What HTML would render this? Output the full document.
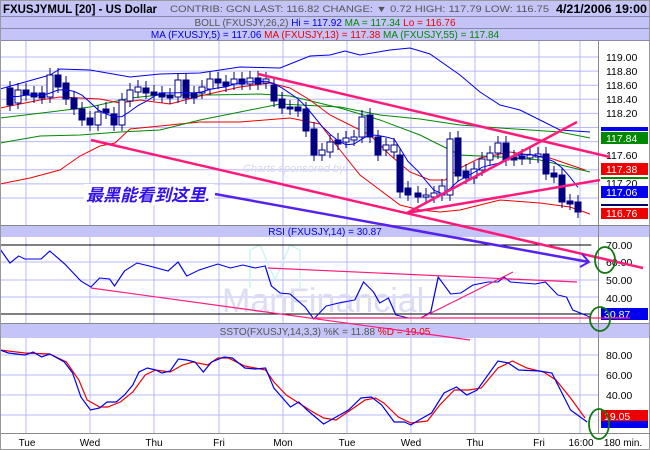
<!DOCTYPE html>
<html><head><meta charset="utf-8"><style>
body{margin:0;background:#fff;}
svg{display:block;font-family:"Liberation Sans",Arial,sans-serif;}
</style></head><body>
<svg id="s" width="650" height="450" viewBox="0 0 650 450" xmlns="http://www.w3.org/2000/svg">
<rect x="0" y="0" width="650" height="450" fill="#fff"/>
<rect x="0" y="0" width="650" height="16" fill="#c4c4f8"/>
<rect x="0" y="16" width="650" height="1" fill="#8888aa"/>
<rect x="0" y="17" width="650" height="11" fill="#c4c4f8"/>
<rect x="0" y="28" width="650" height="1" fill="#8888aa"/>
<rect x="0" y="29" width="650" height="11" fill="#c4c4f8"/>
<rect x="0" y="40" width="650" height="1" fill="#8888aa"/>
<text x="3" y="13" font-size="12" font-weight="bold" fill="#000" textLength="154" lengthAdjust="spacingAndGlyphs">FXUSJYMUL [20] - US Dollar</text>
<text x="170" y="12" font-size="9" fill="#555" textLength="379" lengthAdjust="spacingAndGlyphs">CONTRIB: GCN   LAST: 116.82   CHANGE: ▼ 0.72   HIGH: 117.79   LOW: 116.75</text>
<text x="556" y="13" font-size="12" font-weight="bold" fill="#000" textLength="91" lengthAdjust="spacingAndGlyphs">4/21/2006 19:00</text>
<text x="325" y="26" font-size="10" text-anchor="middle"><tspan fill="#555">BOLL (FXUSJY,26,2) </tspan><tspan fill="#0000dd">Hi = 117.92 </tspan><tspan fill="#008800">MA = 117.34 </tspan><tspan fill="#ee0000">Lo = 116.76</tspan></text>
<text x="325" y="38" font-size="10" text-anchor="middle"><tspan fill="#0000dd">MA (FXUSJY,5) = 117.06 </tspan><tspan fill="#ee0000">MA (FXUSJY,13) = 117.38 </tspan><tspan fill="#008800">MA (FXUSJY,55) = 117.84</tspan></text>

<g id="grid" stroke="#b8b8ff" stroke-width="1"></g>

<rect x="0" y="225" width="650" height="1" fill="#888"/>
<rect x="0" y="226" width="650" height="11" fill="#c4c4f8"/>
<text x="325" y="235" font-size="10" text-anchor="middle" fill="#0000dd">RSI (FXUSJY,14) = 30.87</text>
<rect x="0" y="323" width="650" height="1" fill="#888"/>
<rect x="0" y="324" width="650" height="14" fill="#c4c4f8"/>
<text x="325" y="335" font-size="10" text-anchor="middle"><tspan fill="#555">SSTO(FXUSJY,14,3,3) %K = 11.88 </tspan><tspan fill="#ee0000">%D = 19.05</tspan></text>
<rect x="0" y="433" width="650" height="1" fill="#888"/>

<text x="243" y="172" font-size="11" fill="#d8d8e8" font-style="italic">Charts sponsored by:</text>
<text x="222" y="312" font-size="34" fill="#dcdcf4">ManFinancial</text>
<path d="M250 250 L260 245 L275 280 L290 245 L300 250 L300 288 M250 250 L250 288" stroke="#cff4f4" stroke-width="1.5" fill="none"/>

<g id="main"></g>

<rect x="598" y="41" width="1" height="392" fill="#888"/>
<g font-size="10.5" fill="#000">
<text x="606" y="61">119.00</text><text x="606" y="75">118.80</text><text x="606" y="89">118.60</text><text x="606" y="103">118.40</text><text x="606" y="117">118.20</text>
<text x="606" y="159">117.60</text><text x="606" y="187">117.20</text>
</g>
<rect x="601" y="127" width="47" height="4" fill="#0000ee"/>
<rect x="601" y="132" width="47" height="12" fill="#008800"/><text x="606" y="142" font-size="10.5" fill="#fff">117.84</text>
<rect x="601" y="163" width="47" height="12" fill="#ee0000"/><text x="606" y="173" font-size="10.5" fill="#fff">117.38</text>
<rect x="601" y="177" width="47" height="2" fill="#008800"/>
<rect x="601" y="186" width="47" height="12" fill="#0000ee"/><text x="606" y="196" font-size="10.5" fill="#fff">117.06</text>
<rect x="601" y="204" width="47" height="2" fill="#000066"/>
<rect x="601" y="208" width="47" height="11" fill="#ee0000"/><text x="606" y="217" font-size="10.5" fill="#fff">116.76</text>

<g font-size="10.5" fill="#000">
<text x="606" y="249">70.00</text><text x="606" y="266">60.00</text><text x="606" y="284">50.00</text><text x="606" y="302">40.00</text>
<text x="606" y="359">80.00</text><text x="606" y="379">60.00</text><text x="606" y="399">40.00</text>
</g>
<rect x="601" y="308" width="47" height="12" fill="#0000ee"/><text x="604" y="318" font-size="10.5" fill="#fff">30.87</text>
<rect x="601" y="410" width="47" height="11" fill="#ee0000"/><text x="604" y="420" font-size="10.5" fill="#fff">19.05</text>
<rect x="601" y="421" width="47" height="7" fill="#0000ee"/>

<g font-size="10" fill="#000" text-anchor="middle">
<text x="27" y="446">Tue</text><text x="90" y="446">Wed</text><text x="154" y="446">Thu</text><text x="219" y="446">Fri</text><text x="283" y="446">Mon</text><text x="347" y="446">Tue</text><text x="411" y="446">Wed</text><text x="475" y="446">Thu</text><text x="539" y="446">Fri</text><text x="581" y="446">16:00</text><text x="623" y="446">180 min.</text>
</g>

<rect x="84" y="184" width="130" height="21" fill="#fff"/>
<text x="86" y="201" font-size="17" font-weight="bold" font-style="italic" fill="#3311ee" textLength="124" lengthAdjust="spacingAndGlyphs" font-family="'Liberation Sans','Noto Sans CJK SC',sans-serif">最黑能看到这里.</text>

<g id="over"></g>
<rect x="0.5" y="0.5" width="649" height="449" fill="none" stroke="#999"/>
</svg>
<script>
var NS="http://www.w3.org/2000/svg";
function el(p,t,a){var e=document.createElementNS(NS,t);for(var k in a)e.setAttribute(k,a[k]);document.getElementById(p).appendChild(e);return e;}
function pl(p,pts,c,w,tr){var a={points:pts.map(function(q){return q.join(',')}).join(' '),fill:'none',stroke:c,'stroke-width':w};if(tr){a.transform=tr;}return el(p,'polyline',a);}
var vx=[26,90,154,219,283,347,411,475,539,580];
vx.forEach(function(x){el('grid','line',{x1:x,y1:41,x2:x,y2:225});el('grid','line',{x1:x,y1:237,x2:x,y2:323});el('grid','line',{x1:x,y1:338,x2:x,y2:433});});
for(var y=57;y<=212;y+=14.1){el('grid','line',{x1:0,y1:y,x2:598,y2:y});}
[262,280,297].forEach(function(y){el('grid','line',{x1:0,y1:y,x2:598,y2:y});});
[355,375,395,415].forEach(function(y){el('grid','line',{x1:0,y1:y,x2:598,y2:y});});
pl('main',[[0,89],[50,75],[60,69],[90,70],[130,77],[160,74],[200,73],[240,67],[280,68],[310,56],[330,55],[345,51],[360,55],[390,50],[410,48],[430,54],[460,75],[480,92],[500,105],[520,110],[540,120],[560,130],[590,132]],'#0000ee',1);
pl('main',[[0,184],[30,178],[60,170],[80,156],[100,146],[115,143],[130,129],[160,126],[200,122],[240,122],[290,118],[320,124],[340,150],[360,175],[380,190],[400,205],[420,210],[440,212],[460,210],[500,200],[540,203],[570,207],[590,214]],'#ee0000',1);
pl('main',[[0,143],[40,136],[80,135],[120,132],[160,130],[200,120],[240,112],[280,104],[340,107],[380,115],[420,119],[460,125],[500,128],[560,132],[590,138]],'#008800',1);
pl('main',[[0,118],[50,112],[90,107],[130,98],[160,95],[210,95],[260,94],[290,96],[340,108],[380,120],[420,135],[460,155],[500,157],[540,160],[590,172]],'#008800',1);
pl('main',[[0,108],[40,100],[60,97],[80,98],[100,99],[120,103],[140,100],[170,104],[200,96],[240,87],[270,83],[290,88],[310,100],[330,115],[350,125],[370,135],[390,155],[410,172],[430,180],[445,180],[460,168],[480,158],[510,152],[550,158],[585,170]],'#ee0000',1);
var C=[[10,88,105,1],[18,90,103,0],[26,90,95,1],[34,93,97,1],[42,93,98,1],[50,75,97,0],[58,75,87,1],[66,83,99,1],[74,98,109,1],[82,109,120,1],[90,118,125,1],[98,112,125,0],[106,109,113,1],[114,114,125,1],[122,100,125,0],[130,90,101,0],[138,87,92,0],[146,88,93,1],[154,92,95,1],[162,93,97,1],[170,95,98,1],[178,80,97,0],[186,80,98,1],[194,93,98,1],[202,87,93,0],[210,79,89,0],[218,79,83,1],[226,82,86,1],[234,79,84,0],[242,79,84,1],[250,78,84,0],[258,78,84,1],[266,79,83,0],[274,85,101,1],[282,99,108,1],[290,107,109,1],[298,107,111,1],[306,109,131,1],[314,129,155,1],[322,150,155,0],[330,142,152,0],[338,140,144,1],[346,138,142,0],[354,137,140,0],[362,117,137,0],[370,115,137,1],[378,137,155,1],[386,145,150,0],[394,145,152,0],[400,155,192,1],[408,188,195,1],[418,193,197,1],[426,195,197,0],[434,193,197,0],[442,186,195,0],[450,139,195,0],[458,138,176,1],[466,171,178,1],[474,169,178,0],[482,159,170,0],[490,153,160,0],[498,143,153,0],[506,143,160,1],[514,157,160,1],[522,156,159,1],[530,155,158,0],[538,154,157,0],[546,154,174,1],[554,173,177,1],[562,175,202,1],[570,201,204,1],[578,202,212,1]];
C.forEach(function(c){el('main','line',{x1:c[0],y1:c[1]-7,x2:c[0],y2:c[2]+6,stroke:'#000080','stroke-width':1});el('main','rect',{x:c[0]-3,y:c[1],width:6,height:Math.max(2,c[2]-c[1]),fill:c[3]?'#000080':'#fff',stroke:'#000080','stroke-width':1});});
var m=[];for(var i=0;i<C.length;i++){var s=0,n=0;for(var j=Math.max(0,i-4);j<=i;j++){s+=(C[j][1]+C[j][2])/2;n++;}m.push([C[i][0],s/n]);}
pl('main',m,'#0000ee',1);
pl('main',[[0,245],[475,245]],'#000',1,'scale(1.245,1)');
pl('main',[[0,314],[475,314]],'#000',1,'scale(1.245,1)');
pl('main',[[0,249],[8,263],[15,256],[20,259],[33,259],[40,251],[52,264],[65,281],[73,287],[80,278],[88,279],[92,286],[100,271],[110,263],[120,266],[135,271],[143,262],[150,276],[160,270],[175,264],[185,268],[195,265],[205,268],[213,266],[218,286],[225,293],[233,294],[245,307],[252,319],[262,306],[272,303],[285,300],[292,282],[300,292],[305,303],[312,298],[318,315],[328,318],[338,318],[346,312],[352,277],[362,294],[370,293],[380,285],[392,282],[400,282],[405,277],[410,282],[430,284],[438,282],[448,295],[455,297],[460,310],[470,315],[475,318]],'#0000ee',1,'scale(1.245,1)');
var K=[[0,350],[20,353],[60,355],[80,352],[100,357],[120,354],[155,362],[175,373],[195,397],[218,410],[240,408],[258,402],[280,402],[300,395],[320,385],[335,372],[355,368],[375,370],[390,373],[410,371],[430,359],[450,360],[470,362],[490,372],[510,362],[540,357],[560,358],[590,368],[615,369],[640,368],[660,388],[700,407],[720,402],[740,410],[780,424],[810,417],[840,410],[870,398],[895,397],[920,405],[950,422],[975,422],[990,425],[1010,420],[1040,413],[1070,393],[1100,387],[1125,395],[1150,390],[1200,361],[1225,363],[1250,370],[1300,371],[1330,373],[1375,410],[1415,422]];
var D=[[0,350],[60,353],[120,354],[160,362],[190,380],[210,400],[240,407],[260,407],[290,402],[320,392],[350,375],[375,370],[410,372],[440,365],[465,362],[500,365],[525,358],[550,358],[590,366],[640,370],[660,382],[690,395],[720,403],[750,411],[780,418],[810,420],[845,410],[880,400],[905,398],[925,403],[960,417],[990,423],[1030,421],[1060,405],[1095,390],[1130,390],[1160,388],[1200,368],[1235,361],[1270,368],[1310,372],[1340,380],[1375,398],[1410,418]];
function sc(a){return a.map(function(p){return [p[0]/2.41,p[1]];});}
pl('main',sc(D),'#ee0000',1.2);
pl('main',sc(K),'#0000ee',1.2);
var P='#ff1a7a';
pl('over',[[258,74],[610,157]],P,2.5);
pl('over',[[91,140],[643,268]],P,2.5);
pl('over',[[407,213],[577,122]],P,2.5);
pl('over',[[407,213],[600,180]],P,2.5);
pl('over',[[91,288],[470,340]],P,1.2);
pl('over',[[268,268],[577,282]],P,1.2);
pl('over',[[315,318],[630,318]],P,1.2);
pl('over',[[421,318],[513,272]],P,1.2);
pl('over',[[215,194],[589,262]],'#5522ee',2.5);
pl('over',[[582,254],[589,262],[580,267]],'#5522ee',2);
el('over','ellipse',{cx:605,cy:260,rx:10,ry:13,fill:'none',stroke:'#117711','stroke-width':1.8});
el('over','ellipse',{cx:600,cy:319,rx:10,ry:12,fill:'none',stroke:'#117711','stroke-width':1.8});
el('over','ellipse',{cx:599,cy:424,rx:10,ry:15,fill:'none',stroke:'#117711','stroke-width':1.8});
</script>
</body></html>
